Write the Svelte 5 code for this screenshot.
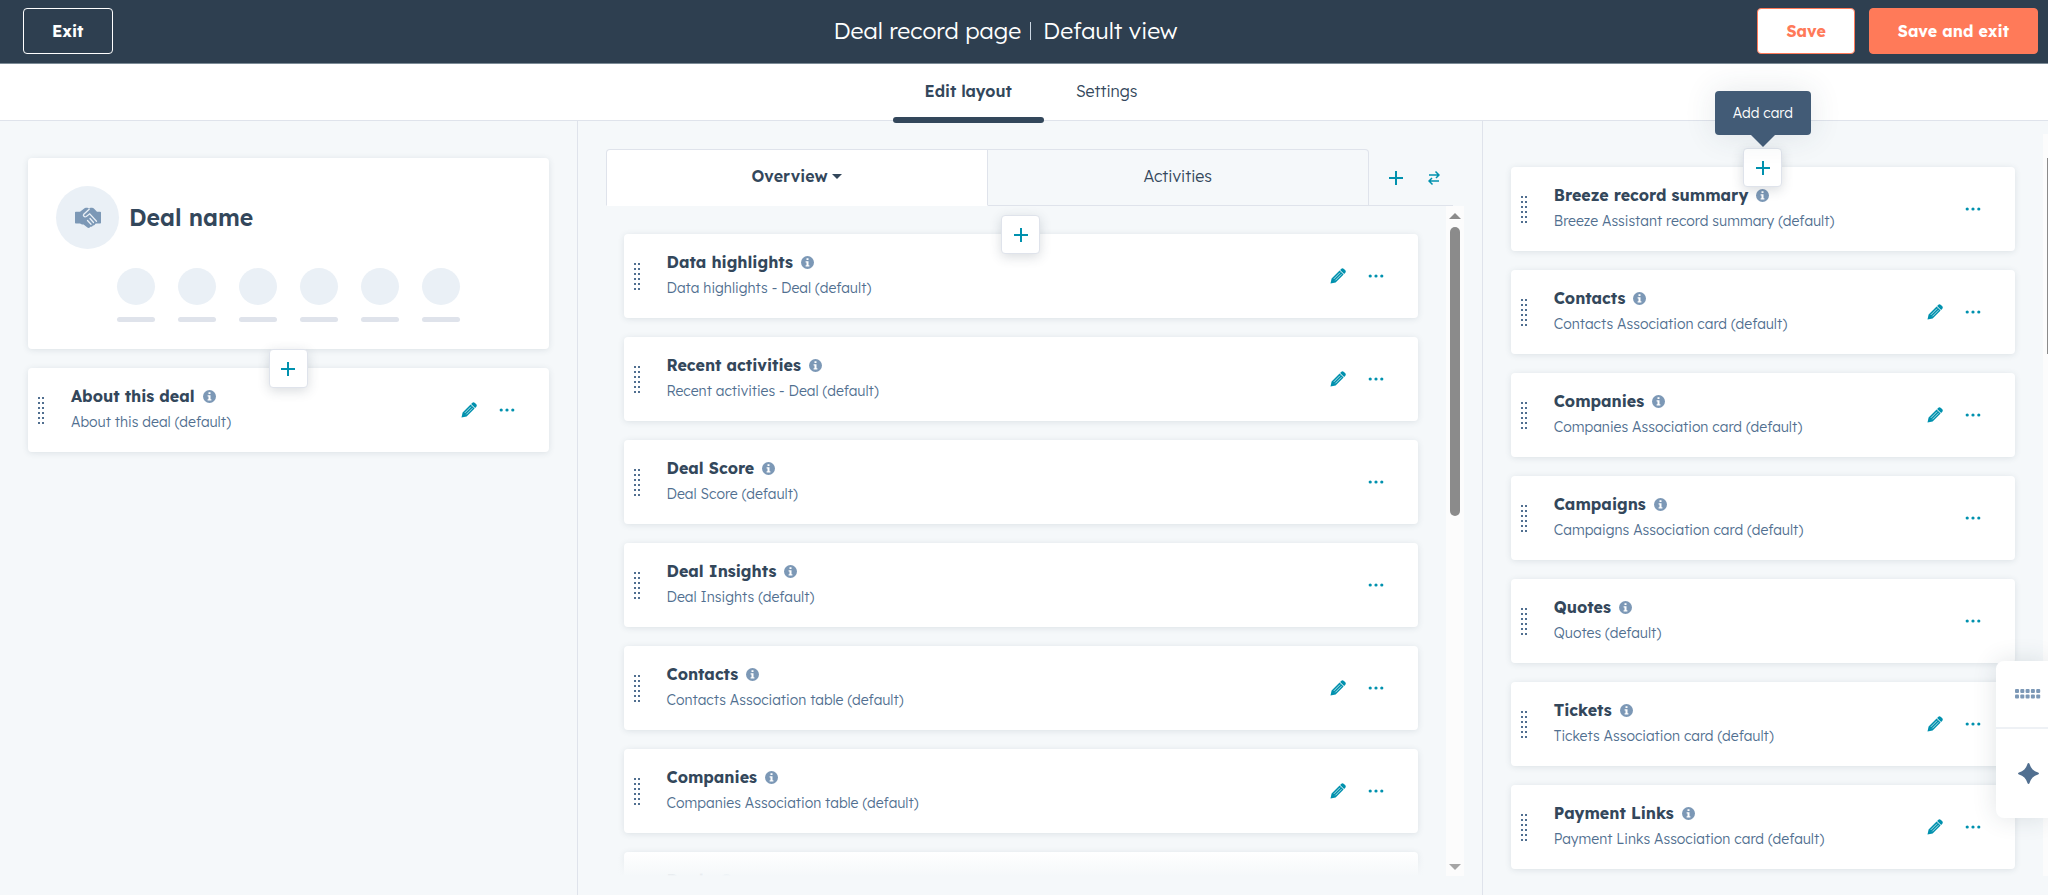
<script>
    const recordCards = [
      { title: 'About this deal', detail: 'About this deal (default)', editable: true }
    ];

    const overviewCards = [
      { title: 'Data highlights', detail: 'Data highlights - Deal (default)', editable: true },
      { title: 'Recent activities', detail: 'Recent activities - Deal (default)', editable: true },
      { title: 'Deal Score', detail: 'Deal Score (default)', editable: false },
      { title: 'Deal Insights', detail: 'Deal Insights (default)', editable: false },
      { title: 'Contacts', detail: 'Contacts Association table (default)', editable: true },
      { title: 'Companies', detail: 'Companies Association table (default)', editable: true },
      { title: 'Deals', detail: 'Deals Association table (default)', editable: true }
    ];

    const sidebarCards = [
      { title: 'Breeze record summary', detail: 'Breeze Assistant record summary (default)', editable: false },
      { title: 'Contacts', detail: 'Contacts Association card (default)', editable: true },
      { title: 'Companies', detail: 'Companies Association card (default)', editable: true },
      { title: 'Campaigns', detail: 'Campaigns Association card (default)', editable: false },
      { title: 'Quotes', detail: 'Quotes (default)', editable: false },
      { title: 'Tickets', detail: 'Tickets Association card (default)', editable: true },
      { title: 'Payment Links', detail: 'Payment Links Association card (default)', editable: true }
    ];

    const gripRows = [0, 1, 2, 3, 4, 5];
    const quickActions = [1, 2, 3, 4, 5, 6];
</script>

{#snippet plus()}
    <svg class="plus" viewBox="0 0 16 16" aria-hidden="true"><path d="M8 1v14M1 8h14" /></svg>
{/snippet}

{#snippet cardList(cards, tooltip)}
    <div class="card-list">
        <div class="add-slot">
            {#if tooltip}
                <div class="tooltip" role="tooltip">{tooltip}</div>
            {/if}
            <button class="add-button" aria-label="Add card">{@render plus()}</button>
        </div>
        {#each cards as card}
            <article class="card">
                <svg class="grip" viewBox="0 0 8 28" aria-hidden="true">
                    {#each gripRows as row}
                        <rect x="1" y={1 + row * 5} width="2" height="2" />
                        <rect x="5" y={1 + row * 5} width="2" height="2" />
                    {/each}
                </svg>
                <div class="card-text">
                    <h3>
                        {card.title}
                        <svg class="info" viewBox="0 0 13 13" aria-hidden="true">
                            <circle cx="6.5" cy="6.5" r="6.5" />
                            <path d="M5.5 2.2h2v1.9h-2zM4.6 5.2h2.9v4h.9v1.3H4.6V9.2h.9V6.5h-.9z" />
                        </svg>
                    </h3>
                    <p>{card.detail}</p>
                </div>
                <div class="card-actions">
                    {#if card.editable}
                        <button class="icon-button" aria-label="Edit {card.title}">
                            <svg class="pencil" viewBox="0 0 16 16" aria-hidden="true">
                                <path d="M10.1 1.9l1-1a2 2 0 0 1 2.8 0l1.2 1.2a2 2 0 0 1 0 2.8l-1 1zM9.6 2.4l4 4-8 8L.5 15.5l1.1-5.100z" />
                                <path class="pencil-line" d="M3.800 10.900l6.200-6.200M5.300 12.400l6.200-6.200" />
                            </svg>
                        </button>
                    {/if}
                    <button class="icon-button" aria-label="More options for {card.title}">
                        <svg class="more" viewBox="0 0 16 4" aria-hidden="true">
                            <circle cx="2.2" cy="2" r="1.6" /><circle cx="8" cy="2" r="1.6" /><circle cx="13.8" cy="2" r="1.6" />
                        </svg>
                    </button>
                </div>
            </article>
        {/each}
    </div>
{/snippet}

<div class="page">
    <header class="top-bar">
        <div class="top-left"><button class="btn btn-exit">Exit</button></div>
        <h1><span class="page-name">Deal record page</span><span>Default view</span></h1>
        <div class="top-right">
            <button class="btn btn-save">Save</button>
            <button class="btn btn-primary">Save and exit</button>
        </div>
    </header>

    <nav class="page-tabs">
        <a href="#layout" class="active">Edit layout</a>
        <a href="#settings">Settings</a>
    </nav>

    <main>
        <section class="column left">
            <div class="record">
                <div class="record-head">
                    <div class="avatar">
                        <svg viewBox="0 0 26 22" aria-hidden="true">
                            <path d="M0 5.500q0-.8.8-.8H5L9.500 1.200q.5-.4 1.200-.4h1.800l1.500.8 1.500-.8h1.700q.8 0 1.400.5L22 4.700h3.200q.8 0 .8.800v10.300q0 .8-.8.8h-3.500l-1.400.2q-.5 2-2.400 1.700-.8 1.700-2.600 1.200-1.200 1.800-2.900.9L8.600 17.500H7L5 16.600H.8q-.8 0-.8-.8z" />
                            <path class="clasp" d="M14.200 2.200L8.800 7.300q-.9 1 .1 2t2.400.2l3.400-2.700 6.800 7.400M12.500 13.500l3.500 3.800M15 11.500l3.500 4" />
                        </svg>
                    </div>
                    <h2>Deal name</h2>
                </div>
                <div class="quick-actions">
                    {#each quickActions as action (action)}
                        <div class="quick-action"><i class="dot"></i><i class="bar"></i></div>
                    {/each}
                </div>
            </div>
            {@render cardList(recordCards, '')}
        </section>

        <section class="column middle">
            <div class="view-tabs">
                <button class="view-tab selected">Overview<i class="caret"></i></button>
                <button class="view-tab">Activities</button>
                <div class="tab-tools">
                    <button class="icon-button" aria-label="Add tab">{@render plus()}</button>
                    <button class="icon-button" aria-label="Reorder tabs">
                        <svg class="swap" viewBox="0 0 12 16" aria-hidden="true"><path d="M1 5h10M7.500 1.500L11 5 8 8M11 11H1M4 8l-3 3 3.500 3.500" /></svg>
                    </button>
                </div>
            </div>
            <div class="pane">
                <div class="pane-content">
                    {@render cardList(overviewCards, '')}
                </div>
                <div class="scrollbar" aria-hidden="true">
                    <i class="arrow up"></i>
                    <div class="track"><div class="thumb"></div></div>
                    <i class="arrow down"></i>
                </div>
            </div>
        </section>

        <section class="column right">
            {@render cardList(sidebarCards, 'Add card')}
            <div class="edge-scrollbar" aria-hidden="true"><div class="edge-thumb"></div></div>
        </section>
    </main>

    <aside class="dock">
        <button class="dock-button" aria-label="Open keypad">
            <svg class="keypad" viewBox="0 0 26 10" aria-hidden="true">
                {#each [0, 1, 2, 3, 4] as col}
                    <rect x={col * 5.3} y="0" width="4" height="4" rx="1" />
                    <rect x={col * 5.3} y="5.5" width="4" height="4" rx="1" />
                {/each}
            </svg>
        </button>
        <button class="dock-button assistant" aria-label="Open assistant">
            <svg class="star" viewBox="0 0 20 20" aria-hidden="true"><path d="M10 0c.5 0 .8.3 1 .9 1.300 4.300 3.800 6.800 8.100 8.100 1.200.4 1.200 1.600 0 2-4.300 1.300-6.800 3.800-8.100 8.100-.4 1.200-1.600 1.200-2 0-1.300-4.300-3.800-6.800-8.100-8.100-1.200-.4-1.200-1.600 0-2 4.300-1.300 6.800-3.800 8.100-8.100.2-.6.5-.9 1-.9z" /></svg>
        </button>
    </aside>
</div>

<style>
    :global(body) {
        margin: 0;
        background: #f5f8fa;
    }

    .page {
        height: 100vh;
        display: flex;
        flex-direction: column;
        overflow: hidden;
        background: #f5f8fa;
        color: #33475b;
        font-family: "Lexend Deca", Inter, "Open Sans", sans-serif;
        font-size: 16px;
    }

    h1, h2, h3, p {
        margin: 0;
    }

    button {
        font: inherit;
        color: inherit;
        cursor: pointer;
    }

    .top-bar {
        display: grid;
        grid-template-columns: 1fr auto 1fr;
        align-items: center;
        flex: none;
        height: 64px;
        padding: 0 10px 2px 23px;
        background: #2e3f50;
        border-bottom: 1px solid #7c8b96;
        box-sizing: border-box;
    }

    .top-bar h1 {
        display: flex;
        padding-right: 50px;
        font-size: 23px;
        line-height: 32px;
        font-weight: 300;
        color: #fff;
    }

    .page-name {
        display: flex;
        align-items: center;
    }

    .page-name::after {
        content: "";
        width: 1px;
        height: 18px;
        margin: 0 12px 0 9px;
        background: #cbd6e2;
    }

    .top-right {
        display: flex;
        justify-content: flex-end;
        gap: 14px;
    }

    .btn {
        height: 46px;
        padding: 0 28px;
        border: 1px solid #fff;
        border-radius: 4px;
        font-weight: 700;
        color: #fff;
        background: transparent;
    }

    .btn-save {
        color: #ff7a59;
        background: #fff;
        border-color: #ff7a59;
    }

    .btn-primary {
        background: #ff7a59;
        border-color: #ff7a59;
    }

    .page-tabs {
        display: flex;
        justify-content: center;
        flex: none;
        height: 56px;
        padding-left: 14px;
        background: #fff;
        border-bottom: 1px solid #dfe3eb;
    }

    .page-tabs a {
        position: relative;
        padding: 0 32px;
        line-height: 54px;
        font-weight: 300;
        color: #33475b;
        text-decoration: none;
    }

    .page-tabs .active {
        font-weight: 600;
    }

    .page-tabs .active::after {
        content: "";
        position: absolute;
        left: 0;
        right: 0;
        bottom: -3px;
        height: 6px;
        border-radius: 3px;
        background: #33475b;
    }

    main {
        display: grid;
        grid-template-columns: 28.2% 1fr 27.6%;
        flex: 1;
        min-height: 0;
    }

    .column {
        min-width: 0;
        min-height: 0;
        box-sizing: border-box;
    }

    .left {
        padding: 37px 28px 0;
        border-right: 1px solid #dfe3eb;
    }

    .record, .card {
        background: #fff;
        border-radius: 4px;
        box-shadow: 0 1px 6px rgba(45, 62, 80, 0.12);
    }

    .record {
        height: 191px;
        padding: 28px;
        margin-bottom: 19px;
        box-sizing: border-box;
    }

    .record-head {
        display: flex;
        align-items: center;
        gap: 10px;
    }

    .avatar {
        display: flex;
        align-items: center;
        justify-content: center;
        width: 63px;
        height: 63px;
        border-radius: 50%;
        background: #eaf0f6;
    }

    .avatar svg {
        width: 26px;
        height: 22px;
        fill: #7c98b6;
    }

    .avatar .clasp {
        fill: none;
        stroke: #eaf0f6;
        stroke-width: 1.3;
        stroke-linecap: round;
    }

    .record h2 {
        font-size: 23px;
        line-height: 32px;
        font-weight: 600;
    }

    .quick-actions {
        display: flex;
        justify-content: center;
        gap: 23px;
        margin-top: 19px;
    }

    .dot, .bar {
        display: block;
        width: 38px;
    }

    .dot {
        height: 37px;
        border-radius: 50%;
        background: #eaf0f6;
    }

    .bar {
        height: 5px;
        margin-top: 12px;
        border-radius: 3px;
        background: #dfe3eb;
    }

    .card-list {
        position: relative;
        display: flex;
        flex-direction: column;
        gap: 19px;
    }

    .add-slot {
        position: absolute;
        top: -19px;
        left: 50%;
        display: flex;
        justify-content: center;
        width: 0;
        z-index: 1;
    }

    .add-button {
        flex: none;
        display: flex;
        align-items: center;
        justify-content: center;
        width: 39px;
        height: 39px;
        padding: 0;
        border: 1px solid #dfe3eb;
        border-radius: 4px;
        background: #fff;
        box-shadow: 0 3px 12px rgba(45, 62, 80, 0.18);
    }

    .tooltip {
        position: absolute;
        bottom: 52px;
        padding: 0 18px;
        border-radius: 4px;
        background: #425b76;
        box-shadow: 0 0 32px rgba(45, 62, 80, 0.12);
        color: #fff;
        font-size: 14px;
        line-height: 44px;
        font-weight: 300;
        white-space: nowrap;
    }

    .tooltip::after {
        content: "";
        position: absolute;
        top: 100%;
        left: 50%;
        margin-left: -12px;
        border: 12px solid transparent;
        border-top-color: #425b76;
        border-bottom: 0;
    }

    .card {
        display: flex;
        align-items: center;
        height: 84px;
        padding: 0 32px 0 9px;
        box-sizing: border-box;
        flex: none;
    }

    .grip {
        width: 8px;
        height: 28px;
        fill: #516f90;
    }

    .card-text {
        flex: 1;
        min-width: 0;
        padding: 0 0 2px 26px;
    }

    h3 {
        display: flex;
        align-items: center;
        gap: 8px;
        font-size: 16px;
        line-height: 24px;
        font-weight: 700;
    }

    .info {
        width: 13px;
        height: 13px;
        fill: #7c98b6;
    }

    .info path {
        fill: #fff;
    }

    .card p {
        margin-top: 2px;
        font-size: 14px;
        line-height: 24px;
        font-weight: 300;
        color: #516f90;
        white-space: nowrap;
    }

    .card-actions {
        display: flex;
        gap: 18px;
    }

    .icon-button {
        display: flex;
        align-items: center;
        justify-content: center;
        width: 20px;
        height: 24px;
        padding: 0;
        border: 0;
        background: none;
    }

    .pencil {
        width: 16px;
        height: 16px;
        fill: #0091ae;
    }

    .pencil-line {
        stroke: #fff;
        stroke-width: 1;
        opacity: 0.7;
    }

    .more {
        width: 16px;
        height: 4px;
        fill: #0091ae;
    }

    .plus {
        width: 16px;
        height: 16px;
        stroke: #0091ae;
        stroke-width: 2;
    }

    .middle {
        display: flex;
        flex-direction: column;
        padding: 28px 18px 19px 28px;
        border-right: 1px solid #dfe3eb;
    }

    .view-tabs {
        display: flex;
        flex: none;
        height: 57px;
        margin-right: 11px;
        box-shadow: inset 0 -1px #dfe3eb;
    }

    .view-tab {
        flex: 1;
        display: flex;
        align-items: center;
        justify-content: center;
        gap: 4px;
        padding: 0 0 3px;
        border: 1px solid #dfe3eb;
        border-left: 0;
        border-radius: 0 4px 0 0;
        background: transparent;
        font-weight: 300;
    }

    .selected {
        border-left: 1px solid #dfe3eb;
        border-bottom-color: #fff;
        border-radius: 4px 0 0 0;
        background: #fff;
        font-weight: 600;
    }

    .caret {
        border: 5px solid transparent;
        border-top-color: #33475b;
        border-bottom: 0;
    }

    .tab-tools {
        display: flex;
        align-items: center;
        justify-content: center;
        gap: 18px;
        width: 84px;
        padding-left: 8px;
        box-sizing: border-box;
    }

    .swap {
        width: 12px;
        height: 16px;
        fill: none;
        stroke: #0091ae;
        stroke-width: 1.5;
    }

    .pane {
        position: relative;
        display: flex;
        flex: 1;
        min-height: 0;
    }

    .pane-content {
        flex: 1;
        min-width: 0;
        padding: 28px 28px 0 18px;
        overflow: auto;
        scrollbar-width: none;
    }

    .pane::after {
        content: "";
        position: absolute;
        left: 0;
        right: 18px;
        bottom: 0;
        height: 24px;
        background: linear-gradient(rgba(245, 248, 250, 0), #f5f8fa);
        pointer-events: none;
    }

    .scrollbar {
        display: flex;
        flex-direction: column;
        align-items: center;
        width: 18px;
        padding: 7px 0 6px;
        box-sizing: border-box;
        background: #fcfcfc;
    }

    .arrow {
        border: 6px solid transparent;
    }

    .up {
        border-top: 0;
        border-bottom-color: #8b8b8b;
    }

    .down {
        border-bottom: 0;
        border-top-color: #a5a5a5;
    }

    .track {
        flex: 1;
        width: 10px;
        padding: 8px 0;
    }

    .thumb {
        height: 46%;
        border-radius: 5px;
        background: #8b8b8b;
    }

    .right {
        position: relative;
        padding: 46px 33px 0 28px;
    }

    /* only the rim of this column's scrollbar is inside the window */
    .edge-scrollbar {
        position: absolute;
        top: 13px;
        right: 0;
        bottom: 19px;
        width: 5px;
        background: #fcfcfc;
    }

    .edge-thumb {
        width: 1px;
        height: 196px;
        margin: 24px 0 0 4px;
        background: #8b8b8b;
    }

    .dock {
        position: fixed;
        right: 0;
        bottom: 77px;
        width: 52px;
        border-radius: 8px 0 0 8px;
        background: #fff;
        box-shadow: 0 0 24px rgba(45, 62, 80, 0.14);
        z-index: 2;
    }

    .dock-button {
        display: flex;
        align-items: center;
        width: 100%;
        height: 66px;
        padding: 0 0 0 19px;
        border: 0;
        background: none;
    }

    .assistant {
        height: 91px;
        padding-left: 22px;
        border-top: 2px solid #eef1f5;
    }

    .keypad {
        width: 26px;
        height: 10px;
        fill: #7c98b6;
    }

    .star {
        width: 21px;
        height: 21px;
        fill: #516f90;
    }
</style>
